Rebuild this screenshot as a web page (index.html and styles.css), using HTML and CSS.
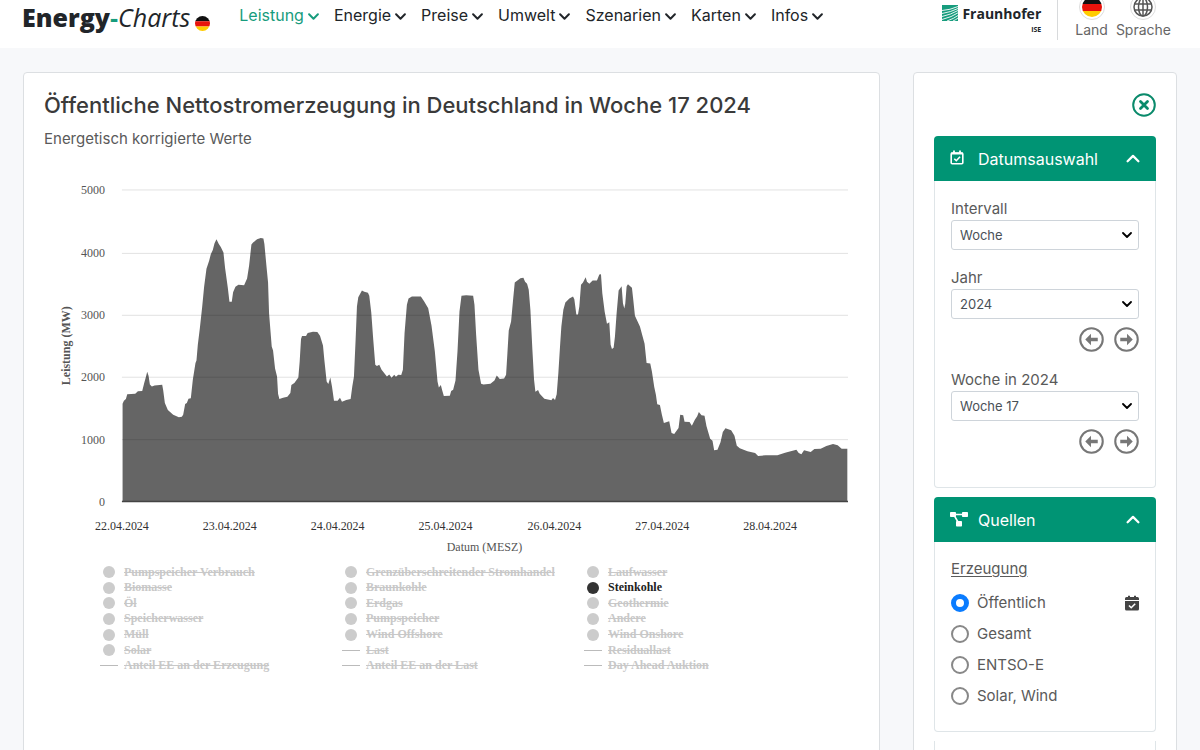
FILE: index.html
```html
<!DOCTYPE html>
<html lang="de">
<head>
<meta charset="utf-8">
<title>Energy-Charts</title>
<link rel="stylesheet" href="styles.css">
</head>
<body>
<svg class="defs" aria-hidden="true">
  <symbol id="chev-down" viewBox="0 0 10 8"><path d="M1 2l4 4 4-4" fill="none" stroke="currentColor" stroke-width="1.8" stroke-linecap="round" stroke-linejoin="round"/></symbol>
  <symbol id="chev-up" viewBox="0 0 12 8"><path d="M1.2 6.500L6 1.700l4.800 4.800" fill="none" stroke="currentColor" stroke-width="2" stroke-linecap="round" stroke-linejoin="round"/></symbol>
  <symbol id="arrow" viewBox="0 0 24 24"><circle cx="12" cy="12" r="10.800" fill="none" stroke="currentColor" stroke-width="2"/><path d="M11.500 6.500L6 12l5.500 5.500V13.700H18v-3.400h-6.500z" fill="currentColor"/></symbol>
  <symbol id="flag" viewBox="0 0 20 20"><clipPath id="round"><circle cx="10" cy="10" r="10"/></clipPath><g clip-path="url(#round)"><path d="M0 0h20v7H0z" fill="#111"/><path d="M0 7h20v7H0z" fill="#e8130c"/><path d="M0 14h20v6H0z" fill="#fc0"/></g></symbol>
</svg>
<div class="app">
  <header class="topbar">
    <a class="logo" href="#"><b>Energy</b><span class="dash">-</span><i>Charts</i><svg class="logo-flag"><use href="#flag"/></svg></a>
    <nav class="nav">
      <a class="active" href="#">Leistung<svg><use href="#chev-down"/></svg></a>
      <a href="#">Energie<svg><use href="#chev-down"/></svg></a>
      <a href="#">Preise<svg><use href="#chev-down"/></svg></a>
      <a href="#">Umwelt<svg><use href="#chev-down"/></svg></a>
      <a href="#">Szenarien<svg><use href="#chev-down"/></svg></a>
      <a href="#">Karten<svg><use href="#chev-down"/></svg></a>
      <a href="#">Infos<svg><use href="#chev-down"/></svg></a>
    </nav>
    <a class="institute" href="#">
      <span class="institute-row"><svg viewBox="0 0 16 16"><path d="M0 0h16v16H0z" fill="#179c7d"/><path d="M0 5.500Q8 5 16 1.500M0 8.500Q9 7 16 3.500M0 11.500Q9 9.500 16 5.500M0 14.500Q10 12 16 7.800M5 16Q12 13.500 16 10.500M11 16Q14 14.700 16 13" fill="none" stroke="#fff" stroke-width=".9"/></svg>Fraunhofer</span>
      <small>ISE</small>
    </a>
    <div class="tools">
      <button type="button" class="tool"><span class="tool-icon"><svg class="tool-flag"><use href="#flag"/></svg></span>Land</button>
      <button type="button" class="tool"><span class="tool-icon"><svg class="tool-globe" viewBox="0 0 20 20"><g fill="none" stroke="#555" stroke-width="1.500"><circle cx="10" cy="10" r="9"/><ellipse cx="10" cy="10" rx="4.500" ry="9"/><path d="M10 1v18M1.500 7h17M1.500 13h17"/></g></svg></span>Sprache</button>
    </div>
  </header>
  <main class="content">
    <section class="card chart-card">
      <h1>Öffentliche Nettostromerzeugung in Deutschland in Woche 17 2024</h1>
      <p class="subtitle">Energetisch korrigierte Werte</p>
      <svg class="chart" viewBox="44 160 816 400" role="img" aria-label="Leistung Steinkohle">
        <g transform="scale(.33333)">
          <path class="area" d="M368 1506L368 1212 372 1203 378 1198 382 1184 406 1182 414 1175 427 1174 433 1150 438 1132 442 1116 446 1128 450 1154 456 1160 464 1157 487 1155 490 1172 495 1210 504 1231 520 1245 537 1253 546 1251 550 1245 556 1213 561 1210 566 1197 573 1196 579 1140 587 1090 590 1082 594 1035 600 986 607 922 613 860 620 807 628 783 633 763 639 750 644 731 650 718 657 732 663 741 671 758 676 805 684 863 689 906 696 906 700 877 707 861 716 855 733 856 742 836 748 798 755 734 760 728 772 718 783 714 791 716 794 732 800 797 805 848 808 940 816 1040 820 1052 826 1106 832 1130 835 1182 839 1198 850 1194 863 1191 872 1180 875 1156 884 1150 896 1133 900 1085 904 1018 907 1009 919 1009 924 1000 940 996 953 997 961 1008 970 1037 974 1080 981 1145 986 1153 992 1133 997 1160 1003 1203 1014 1203 1021 1194 1027 1206 1040 1201 1053 1198 1058 1160 1063 1130 1068 1020 1072 920 1076 892 1087 872 1094 876 1105 879 1109 888 1115 938 1121 1020 1127 1095 1132 1099 1139 1095 1146 1110 1162 1130 1169 1124 1176 1134 1184 1125 1189 1131 1196 1125 1205 1126 1210 1110 1215 1000 1222 915 1227 896 1237 890 1264 890 1274 905 1286 925 1296 978 1306 1055 1314 1145 1318 1163 1324 1156 1328 1172 1333 1189 1351 1188 1355 1174 1361 1170 1368 1142 1374 1055 1380 935 1386 888 1400 886 1421 888 1425 915 1430 1005 1437 1110 1445 1152 1452 1154 1473 1152 1485 1142 1492 1127 1501 1138 1514 1136 1520 1125 1524 1060 1528 992 1535 965 1541 900 1546 848 1554 842 1563 835 1572 834 1577 846 1583 852 1588 870 1593 930 1599 1050 1604 1140 1608 1176 1616 1171 1621 1182 1635 1197 1656 1202 1661 1195 1667 1201 1672 1184 1677 1120 1682 1040 1686 980 1692 930 1698 908 1710 896 1721 890 1725 898 1731 944 1736 944 1740 920 1745 855 1751 848 1759 832 1763 846 1770 852 1780 842 1793 842 1800 824 1805 823 1809 880 1816 935 1823 972 1830 967 1834 1035 1838 1048 1843 1044 1847 1010 1852 940 1858 872 1867 859 1871 910 1875 926 1878 912 1882 860 1886 853 1898 864 1902 900 1907 948 1922 980 1936 1032 1942 1090 1953 1091 1958 1115 1965 1162 1970 1185 1974 1214 1982 1216 1988 1245 1994 1270 2010 1265 2017 1300 2025 1303 2038 1285 2043 1245 2052 1247 2056 1266 2071 1267 2078 1278 2087 1260 2094 1250 2099 1237 2107 1247 2116 1248 2122 1280 2133 1317 2140 1323 2145 1352 2155 1350 2164 1328 2171 1297 2179 1286 2196 1292 2206 1308 2213 1338 2222 1346 2245 1355 2268 1360 2277 1369 2300 1367 2335 1367 2358 1359 2392 1350 2399 1360 2407 1364 2415 1352 2435 1357 2446 1348 2465 1347 2482 1339 2502 1333 2516 1337 2528 1347 2545 1347V1506z"/>
        </g>
        <path class="grid" d="M122 190H849M122 253.500H849M122 315.500H849M122 377.500H849M122 440H849"/>
        <path class="axis" d="M122 502H849"/>
        <g class="y-labels">
          <text x="105" y="194">5000</text><text x="105" y="257">4000</text><text x="105" y="319">3000</text>
          <text x="105" y="381">2000</text><text x="105" y="444">1000</text><text x="105" y="506">0</text>
        </g>
        <text class="y-title" transform="translate(70 346) rotate(-90)">Leistung (MW)</text>
        <g class="x-labels">
          <text x="122" y="530">22.04.2024</text><text x="230" y="530">23.04.2024</text><text x="338" y="530">24.04.2024</text>
          <text x="446" y="530">25.04.2024</text><text x="555" y="530">26.04.2024</text><text x="663" y="530">27.04.2024</text>
          <text x="771" y="530">28.04.2024</text>
        </g>
        <text class="x-title" x="485" y="552">Datum (MESZ)</text>
      </svg>
      <div class="legend">
        <button type="button"><span class="dot"></span>Pumpspeicher Verbrauch</button>
        <button type="button"><span class="dot"></span>Grenzüberschreitender Stromhandel</button>
        <button type="button"><span class="dot"></span>Laufwasser</button>
        <button type="button"><span class="dot"></span>Biomasse</button>
        <button type="button"><span class="dot"></span>Braunkohle</button>
        <button type="button" class="on"><span class="dot"></span>Steinkohle</button>
        <button type="button"><span class="dot"></span>Öl</button>
        <button type="button"><span class="dot"></span>Erdgas</button>
        <button type="button"><span class="dot"></span>Geothermie</button>
        <button type="button"><span class="dot"></span>Speicherwasser</button>
        <button type="button"><span class="dot"></span>Pumpspeicher</button>
        <button type="button"><span class="dot"></span>Andere</button>
        <button type="button"><span class="dot"></span>Müll</button>
        <button type="button"><span class="dot"></span>Wind Offshore</button>
        <button type="button"><span class="dot"></span>Wind Onshore</button>
        <button type="button"><span class="dot"></span>Solar</button>
        <button type="button"><span class="line"></span>Last</button>
        <button type="button"><span class="line"></span>Residuallast</button>
        <button type="button"><span class="line"></span>Anteil EE an der Erzeugung</button>
        <button type="button"><span class="line"></span>Anteil EE an der Last</button>
        <button type="button"><span class="line"></span>Day Ahead Auktion</button>
      </div>
    </section>
    <aside class="card sidebar">
      <button type="button" class="close" aria-label="Schließen"><svg viewBox="0 0 24 24"><circle cx="12" cy="12" r="10.800" fill="none" stroke="currentColor" stroke-width="2"/><path d="M8.500 8.500l7 7M15.500 8.500l-7 7" stroke="currentColor" stroke-width="2.800" stroke-linecap="round"/></svg></button>
      <section class="panel">
        <button type="button" class="panel-head">
          <svg class="head-icon" viewBox="0 0 20 20"><g fill="none" stroke="currentColor"><rect x="1.200" y="4" width="11.600" height="10.800" rx="1" stroke-width="1.600"/><path d="M1 4.500h12" stroke-width="2"/><path d="M4 1.500v2.500M10 1.500v2.500" stroke-width="1.800"/><path d="M4.300 9.700l2 2 3.700-3.900" stroke-width="1.600"/></g></svg>
          <span>Datumsauswahl</span><svg class="head-chev"><use href="#chev-up"/></svg>
        </button>
        <div class="panel-body dates">
          <div class="field">
            <label for="interval">Intervall</label>
            <div class="select"><select id="interval"><option>Woche</option></select><svg><use href="#chev-down"/></svg></div>
          </div>
          <div class="field">
            <label for="year">Jahr</label>
            <div class="select"><select id="year"><option>2024</option></select><svg><use href="#chev-down"/></svg></div>
            <div class="steps"><button type="button" aria-label="Jahr zurück"><svg><use href="#arrow"/></svg></button><button type="button" class="next" aria-label="Jahr vor"><svg><use href="#arrow"/></svg></button></div>
          </div>
          <div class="field">
            <label for="week">Woche in 2024</label>
            <div class="select"><select id="week"><option>Woche 17</option></select><svg><use href="#chev-down"/></svg></div>
            <div class="steps"><button type="button" aria-label="Woche zurück"><svg><use href="#arrow"/></svg></button><button type="button" class="next" aria-label="Woche vor"><svg><use href="#arrow"/></svg></button></div>
          </div>
        </div>
      </section>
      <section class="panel">
        <button type="button" class="panel-head">
          <svg class="head-icon" viewBox="0 0 20 20"><g fill="currentColor"><rect x="0" y="2" width="6" height="5" rx=".8"/><rect x="12" y="2" width="6" height="5" rx=".8"/><rect x="6" y="11" width="6" height="5.500" rx=".8"/></g><path d="M5 4.500h8M4.500 6l3.500 6" stroke="currentColor" stroke-width="1.500"/></svg>
          <span>Quellen</span><svg class="head-chev"><use href="#chev-up"/></svg>
        </button>
        <fieldset class="panel-body sources">
          <legend>Erzeugung</legend>
          <div class="choice"><label><input type="radio" name="source" checked>Öffentlich</label><svg viewBox="0 0 14 16"><path d="M1.500 2H3V.7h2V2h4V.7h2V2h1.500Q14 2 14 3.500V5H0V3.500Q0 2 1.500 2zM0 6h14v8q0 1.500-1.500 1.500h-11Q0 15.500 0 14z" fill="#444"/><path d="M4 10.500l2.200 2.200 4-4" fill="none" stroke="#fff" stroke-width="1.600"/></svg></div>
          <div class="choice"><label><input type="radio" name="source">Gesamt</label></div>
          <div class="choice"><label><input type="radio" name="source">ENTSO-E</label></div>
          <div class="choice"><label><input type="radio" name="source">Solar, Wind</label></div>
        </fieldset>
      </section>
      <section class="panel panel-open"></section>
    </aside>
  </main>
</div>
</body>
</html>
```
FILE: styles.css
```css
* { box-sizing: border-box; }
body { margin: 0; background: #f7f8fa; color: #5a5a5a; font: 15px/22px Inter, sans-serif; }
button { margin: 0; padding: 0; border: 0; background: none; color: inherit; font: inherit; cursor: pointer; }
a { color: inherit; text-decoration: none; }
svg { display: block; flex: none; }
.defs { position: absolute; width: 0; height: 0; }
.app { height: 100vh; overflow: hidden; }

.topbar { display: flex; align-items: center; height: 64px; margin-top: -16px; padding: 0 24px 0 22px; background: #fff; }
.logo { display: flex; align-items: center; padding-top: 2px; color: #212529; font: 25px/32px "Open Sans", sans-serif; }
.logo b { font-weight: 800; }
.logo i { font-weight: 400; }
.logo .dash { color: #179c7d; font-weight: 700; }
.logo-flag { width: 15px; height: 15px; margin: 12px 0 0 5px; }
.nav { display: flex; gap: 15px; margin-left: 29px; padding-bottom: 2px; color: #212529; font-size: 16px; }
.nav a { display: flex; align-items: center; gap: 4px; line-height: 24px; }
.nav svg { width: 11px; height: 9px; margin-top: 3px; }
.nav .active { color: #179c7d; }
.institute { display: flex; flex-direction: column; align-items: flex-end; margin-left: auto; padding: 5px 16px 0 0; color: #212529; font: 700 14px/22px "Open Sans", sans-serif; }
.institute-row { display: flex; gap: 4px; }
.institute-row svg { width: 16px; height: 16px; margin-top: 2px; }
.institute small { font-size: 7px; line-height: 10px; }
.tools { display: flex; align-items: center; gap: 8px; height: 48px; padding: 2px 5px 0 17px; border-left: 1px solid #d8dadc; }
.tool { display: flex; flex-direction: column; align-items: center; font-size: 14px; line-height: 20px; color: #666; }
.tool-icon { display: flex; align-items: center; justify-content: center; width: 26px; height: 26px; border: 1px solid #ddd; border-radius: 50%; }
.tool-flag, .tool-globe { width: 20px; height: 20px; }

.content { display: flex; align-items: stretch; gap: 33px; padding: 24px 23px; }
.card { border: 1px solid #dcdfe2; border-radius: 4px; background: #fff; padding: 20px; }
.chart-card { flex: 1; min-width: 0; }
h1 { margin: 0; color: #3a3a3a; font-size: 22px; font-weight: 500; line-height: 24px; }
.subtitle { margin: 11px 0 0; }
.chart { width: 100%; margin-top: 10px; font-family: "Liberation Serif", serif; font-size: 12px; fill: #555; }
.area { fill: #656565; }
.grid { stroke: #000; stroke-opacity: .12; }
.axis { stroke: #444; stroke-width: 1.500; }
.y-labels { text-anchor: end; }
.x-labels { text-anchor: middle; fill: #333; }
.x-title { text-anchor: middle; }
.y-title { text-anchor: middle; font-weight: 700; }
.legend { display: grid; grid-template-columns: repeat(3, 242px); grid-template-rows: repeat(7, 1fr); height: 109px; margin: 5px 0 0 56px; font: 700 12px/15px "Liberation Serif", serif; color: #c8c8c8; }
.legend button { display: flex; align-items: center; gap: 6px; text-decoration: line-through; white-space: nowrap; }
.dot { width: 12px; height: 12px; margin: 0 3px; border-radius: 50%; background: #ccc; }
.line { width: 18px; height: 1px; background: #bbb; }
.legend .on { color: #222; text-decoration: none; }
.on .dot { background: #333; }

.sidebar { display: flex; flex-direction: column; width: 264px; }
.close { align-self: flex-end; color: #0a8a6b; }
.close svg { width: 24px; height: 24px; }
.panel { margin-top: 9px; }
.close + .panel { margin-top: 19px; }
.panel-head { display: flex; align-items: center; width: 100%; height: 45px; padding: 0 16px; border-radius: 4px 4px 0 0; background: #009474; color: #fff; font-size: 16px; }
.panel-head span { flex: 1; margin-left: 8px; text-align: left; }
.head-icon { width: 20px; height: 20px; }
.head-chev { width: 14px; height: 9px; }
.panel-body { margin: 0; padding: 16px; border: 1px solid #dfe5e8; border-top: 0; border-radius: 0 0 4px 4px; }
.dates { display: grid; gap: 16px; padding-bottom: 33px; }
.field label { display: block; line-height: 23px; }
.select { display: grid; align-items: center; }
.select > * { grid-area: 1 / 1; }
.select select { width: 100%; height: 30px; padding: 0 8px; border: 1px solid #ced4da; border-radius: 3px; appearance: none; background: #fff; color: #495057; font: 13px Inter, sans-serif; }
.select svg { justify-self: end; width: 10px; height: 8px; margin-right: 7px; color: #000; pointer-events: none; }
.steps { display: flex; justify-content: flex-end; gap: 10px; margin-top: 8px; color: #777; }
.steps svg { width: 25px; height: 25px; }
.next svg { transform: scaleX(-1); }
.sources { min-width: 0; padding-bottom: 20px; }
.sources legend { float: left; width: 100%; padding: 0; margin-bottom: 7px; text-decoration: underline; text-underline-offset: 2px; }
.choice { display: flex; align-items: center; justify-content: space-between; clear: both; height: 31px; }
.choice label { display: flex; align-items: center; gap: 8px; }
.choice input { width: 18px; height: 18px; margin: 0; border: 2px solid #888; border-radius: 50%; appearance: none; background: #fff; }
.choice input:checked { border: 5px solid #0a7cff; }
.choice svg { width: 14px; height: 16px; }
.panel-open { height: 60px; border: 1px solid #dfe5e8; border-width: 0 1px; }
```
